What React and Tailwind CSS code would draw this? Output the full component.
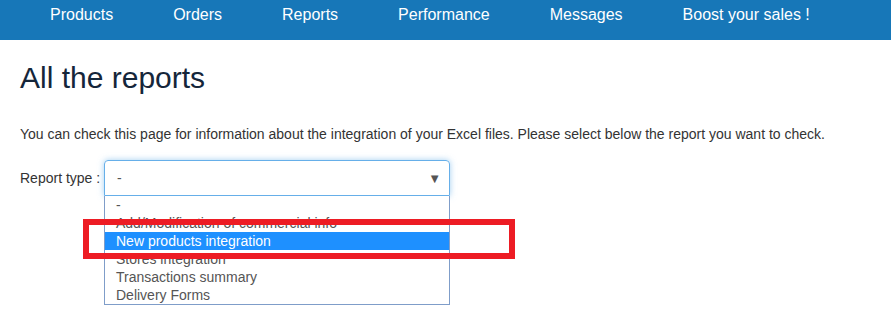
const NAV = ['Products', 'Orders', 'Reports', 'Performance', 'Messages', 'Boost your sales !'];

const OPTIONS = [
  '-',
  'Add/Modification of commercial info',
  'New products integration',
  'Stores integration',
  'Transactions summary',
  'Delivery Forms'
];

export default function App() {
  const selected = 2;

  return (
    <div className="relative w-[891px] h-[333px] bg-white overflow-hidden" style={{ fontFamily: '"Liberation Sans", Arial, sans-serif' }}>
      <nav className="h-[40px] bg-[#1777b8]">
        <ul className="flex pl-[20px]">
          {NAV.map((item) => (
            <li key={item} className="px-[30px] py-[5px] text-[16px] leading-[20px] text-white">
              {item}
            </li>
          ))}
        </ul>
      </nav>

      <div className="px-[20px]">
        <h1 className="mt-[21px] text-[30px] leading-[33px] text-[#15263a]">All the reports</h1>
        <p className="mt-[30px] text-[14px] leading-[20px] text-[#333333]">
          You can check this page for information about the integration of your Excel files. Please select below the report you want to check.
        </p>

        <div className="mt-[16px] flex items-start">
          <label className="w-[84px] pt-[9px] text-[14px] leading-[18px] text-[#333333]">Report type :</label>
          <div className="w-[346px]">
            <div className="flex h-[36px] items-center justify-between rounded-t-[4px] border border-[#66afe9] pl-[12px] pr-[8px] text-[14px] text-[#555555] shadow-[0_0_6px_rgba(102,175,233,0.6)]">
              <span>-</span>
              <span className="text-[13px] leading-none text-[#555555]">▼</span>
            </div>
            <ul className="border border-t-0 border-[#7f9dc9] bg-white">
              {OPTIONS.map((opt, i) => (
                <li
                  key={opt}
                  className={
                    i === selected
                      ? 'h-[18px] pl-[11px] text-[14px] leading-[18px] bg-[#1e90ff] text-white'
                      : 'h-[18px] pl-[11px] text-[14px] leading-[18px] text-[#555555]'
                  }
                >
                  {opt}
                </li>
              ))}
            </ul>
          </div>
        </div>
      </div>

      {/* annotation */}
      <div className="absolute left-[83px] top-[219px] w-[432px] h-[40px] border-[6px] border-[#ed1c24]" />
    </div>
  );
}
